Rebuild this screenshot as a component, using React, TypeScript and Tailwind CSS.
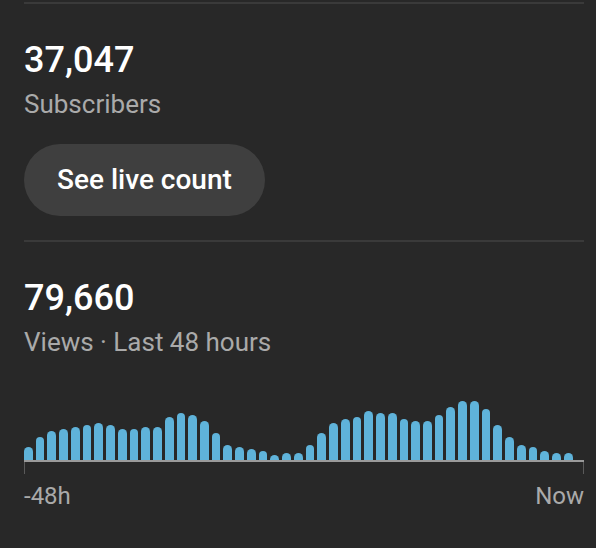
import React from 'react';

const viewsByHour: number[] = [
  13, 23, 29, 31, 33, 35, 37, 35, 31, 31, 33, 33,
  43, 47, 45, 39, 27, 15, 13, 11, 9, 5, 7, 7,
  15, 27, 37, 41, 43, 49, 47, 47, 41, 39, 39, 45,
  53, 59, 59, 51, 35, 23, 15, 13, 9, 7, 7, 0,
];

const App: React.FC = () => {
  return (
    <div
      className="w-full h-[548px] bg-[#282828] pl-6 pr-3 overflow-hidden"
      style={{ fontFamily: 'Roboto, "Liberation Sans", sans-serif' }}
    >
      {/* Subscribers */}
      <div className="mt-[2px] h-[2px] bg-[#3a3a3a]" />
      <div className="mt-[34px] text-[36px] leading-[44px] font-medium text-white">37,047</div>
      <div className="mt-[6px] text-[26px] leading-[32px] text-[#aaaaaa]">Subscribers</div>
      <button className="mt-6 h-[72px] px-[33px] rounded-full bg-[#3f3f3f] text-[28px] font-medium text-white">
        See live count
      </button>

      {/* Views */}
      <div className="mt-6 h-[2px] bg-[#3a3a3a]" />
      <div className="mt-[34px] text-[36px] leading-[44px] font-medium text-white">79,660</div>
      <div className="mt-[6px] text-[26px] leading-[32px] text-[#aaaaaa]">Views · Last 48 hours</div>

      {/* Chart */}
      <div className="mt-[42px] flex items-end gap-[3px] h-[60px]">
        {viewsByHour.map((h, i) => (
          <div
            key={i}
            className="flex-1 rounded-t-full bg-[#5fb3da]"
            style={{ height: h }}
          />
        ))}
      </div>
      <div className="h-[2px] bg-[#9a9a9a]" />
      <div className="flex justify-between">
        <div className="w-px h-3 bg-[#5a5a5a]" />
        <div className="w-px h-3 bg-[#5a5a5a]" />
      </div>
      <div className="mt-[8px] flex justify-between text-[24px] leading-[28px] text-[#aaaaaa]">
        <span>-48h</span>
        <span>Now</span>
      </div>
    </div>
  );
};

export default App;
